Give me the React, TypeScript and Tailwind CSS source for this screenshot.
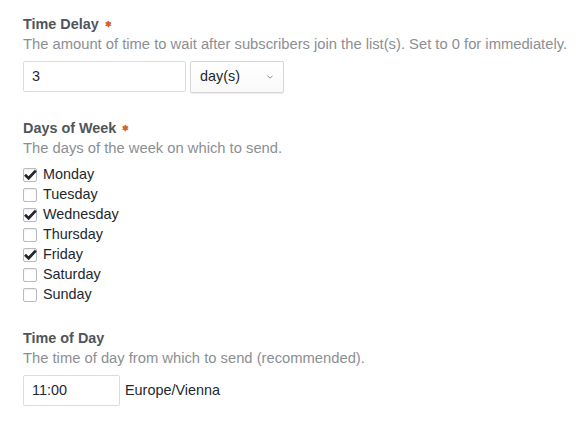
import React from 'react'

const days = [
  { name: 'Monday', checked: true },
  { name: 'Tuesday', checked: false },
  { name: 'Wednesday', checked: true },
  { name: 'Thursday', checked: false },
  { name: 'Friday', checked: true },
  { name: 'Saturday', checked: false },
  { name: 'Sunday', checked: false },
]

function Title({ children, required }: { children: React.ReactNode; required?: boolean }) {
  return (
    <div className="h-5 leading-5 text-[14.4px] font-bold text-[#50555b] flex items-center">
      <span>{children}</span>
      {required && <span className="ml-[6px] mt-[2px] text-[8px] text-[#d0612d] leading-5">✱</span>}
    </div>
  )
}

function Desc({ children }: { children: React.ReactNode }) {
  return <div className="h-5 leading-5 text-[14.75px] text-[#8b8f94] whitespace-nowrap">{children}</div>
}

function Checkbox({ checked }: { checked: boolean }) {
  return (
    <span className="relative w-[14px] h-[14px] border border-[#b8bcc0] rounded-[2px] bg-white shadow-[inset_0_1px_2px_rgba(0,0,0,0.07)] shrink-0">
      {checked && (
        <svg width="13" height="12" viewBox="0 0 13 12" className="absolute left-0 top-0">
          <path d="M1 5.8 L4.6 9.2 L11.8 1.6" fill="none" stroke="#23262a" strokeWidth="2.8" strokeLinecap="butt" strokeLinejoin="miter" />
        </svg>
      )}
    </span>
  )
}

export default function App() {
  return (
    <div className="w-[586px] h-[427px] bg-white pl-[23px] pt-[14px] text-[#2c3136]" style={{ fontFamily: '"Liberation Sans", Arial, sans-serif' }}>
      {/* Time delay */}
      <div>
        <Title required>Time Delay</Title>
        <Desc>The amount of time to wait after subscribers join the list(s). Set to 0 for immediately.</Desc>
        <div className="mt-[7px] flex gap-1">
          <div className="w-[163px] h-[31px] border border-[#dcdcde] rounded-[2px] bg-white px-2 flex items-center text-[14.4px] text-[#23282d]">
            3
          </div>
          <div className="w-[94px] h-[32px] border border-[#d6d6d8] rounded-[2px] bg-gradient-to-b from-white to-[#f9f9f9] shadow-[0_1px_1px_rgba(0,0,0,0.08)] pl-[9px] pr-[10px] flex items-center justify-between text-[14.4px] text-[#23282d]">
            <span>day(s)</span>
            <svg width="6" height="4" viewBox="0 0 6 4">
              <path d="M0.5 0.8 L3 3.2 L5.5 0.8" fill="none" stroke="#8c8f94" strokeWidth="1" />
            </svg>
          </div>
        </div>
      </div>

      {/* Days of week */}
      <div className="mt-[25px]">
        <Title required>Days of Week</Title>
        <Desc>The days of the week on which to send.</Desc>
        <div className="mt-[7px] flex flex-col">
          {days.map((d) => (
            <label key={d.name} className="h-5 flex items-center gap-[6px] text-[14.4px] text-[#23282d]">
              <Checkbox checked={d.checked} />
              <span>{d.name}</span>
            </label>
          ))}
        </div>
      </div>

      {/* Time of day */}
      <div className="mt-[23px]">
        <Title>Time of Day</Title>
        <Desc>The time of day from which to send (recommended).</Desc>
        <div className="mt-[7px] flex items-center gap-[5px]">
          <div className="w-[97px] h-[31px] border border-[#dcdcde] rounded-[2px] bg-white px-2 flex items-center text-[14.4px] text-[#23282d]">
            11:00
          </div>
          <span className="text-[14.4px] text-[#23282d]">Europe/Vienna</span>
        </div>
      </div>
    </div>
  )
}
